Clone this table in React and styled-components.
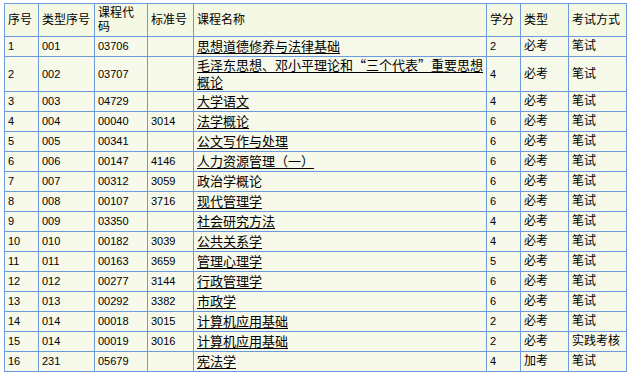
import React from 'react'
import styled, { createGlobalStyle } from 'styled-components'

const GlobalStyle = createGlobalStyle`
  * {
    box-sizing: border-box;
  }
  body {
    margin: 0;
    background: #ffffff;
    font-family: 'Liberation Sans', 'Noto Sans CJK SC', sans-serif;
    color: #000000;
  }
`

const columns = [
  { title: '序号', width: 33 },
  { title: '类型序号', width: 55 },
  { title: '课程代码', width: 52 },
  { title: '标准号', width: 45 },
  { title: '课程名称', width: 292 },
  { title: '学分', width: 33 },
  { title: '类型', width: 47 },
  { title: '考试方式', width: 57 },
]

const courses = [
  ['1', '001', '03706', '', '思想道德修养与法律基础', '2', '必考', '笔试'],
  ['2', '002', '03707', '', '毛泽东思想、邓小平理论和“三个代表”重要思想\n概论', '4', '必考', '笔试'],
  ['3', '003', '04729', '', '大学语文', '4', '必考', '笔试'],
  ['4', '004', '00040', '3014', '法学概论', '6', '必考', '笔试'],
  ['5', '005', '00341', '', '公文写作与处理', '6', '必考', '笔试'],
  ['6', '006', '00147', '4146', '人力资源管理（一）', '6', '必考', '笔试'],
  ['7', '007', '00312', '3059', '政治学概论', '6', '必考', '笔试', true],
  ['8', '008', '00107', '3716', '现代管理学', '6', '必考', '笔试'],
  ['9', '009', '03350', '', '社会研究方法', '4', '必考', '笔试'],
  ['10', '010', '00182', '3039', '公共关系学', '4', '必考', '笔试'],
  ['11', '011', '00163', '3659', '管理心理学', '5', '必考', '笔试'],
  ['12', '012', '00277', '3144', '行政管理学', '6', '必考', '笔试'],
  ['13', '013', '00292', '3382', '市政学', '6', '必考', '笔试'],
  ['14', '014', '00018', '3015', '计算机应用基础', '2', '必考', '笔试'],
  ['15', '014', '00019', '3016', '计算机应用基础', '2', '必考', '实践考核'],
  ['16', '231', '05679', '', '宪法学', '4', '加考', '笔试'],
]

const Page = styled.div`
  padding: 3px 0 0 4px;
`

const Table = styled.table`
  width: 623px;
  table-layout: fixed;
  border-collapse: separate;
  border-spacing: 1px;
  background: #6b9add;
`

const HeadCell = styled.th`
  width: ${(p) => p.$width}px;
  height: 32px;
  padding: 0 2px 0 3px;
  background: #f5f8e2;
  font-size: 12px;
  font-weight: normal;
  line-height: 14px;
  text-align: left;
  vertical-align: middle;
`

const Row = styled.tr``

const Cell = styled.td`
  height: ${(p) => (p.$tall ? 33 : 19)}px;
  padding: 0 2px 0 3px;
  background: #f7f9ea;
  font-size: ${(p) => (p.$num ? 11 : 12)}px;
  line-height: 15px;
  vertical-align: middle;
  white-space: pre-line;
`

const CourseLink = styled.a`
  font-family: 'Noto Sans CJK SC', sans-serif;
  font-size: 13px;
  color: #000000;
  text-decoration: ${(p) => (p.$plain ? 'none' : 'underline')};
  text-underline-offset: 2px;
`

const isNumber = (value) => /^\d+$/.test(value)

const App = () => {
  return (
    <>
      <GlobalStyle />
      <Page>
        <Table>
          <thead>
            <Row>
              {columns.map((col) => (
                <HeadCell key={col.title} $width={col.width}>
                  {col.title}
                </HeadCell>
              ))}
            </Row>
          </thead>
          <tbody>
            {courses.map((course) => {
              const tall = course[4].includes('\n')
              return (
                <Row key={course[0]}>
                  {course.slice(0, 8).map((value, i) =>
                    i === 4 ? (
                      <Cell key={i} $tall={tall}>
                        <CourseLink href="#" $plain={course[8]}>
                          {value}
                        </CourseLink>
                      </Cell>
                    ) : (
                      <Cell key={i} $tall={tall} $num={isNumber(value)}>
                        {value}
                      </Cell>
                    )
                  )}
                </Row>
              )
            })}
          </tbody>
        </Table>
      </Page>
    </>
  )
}

export default App
